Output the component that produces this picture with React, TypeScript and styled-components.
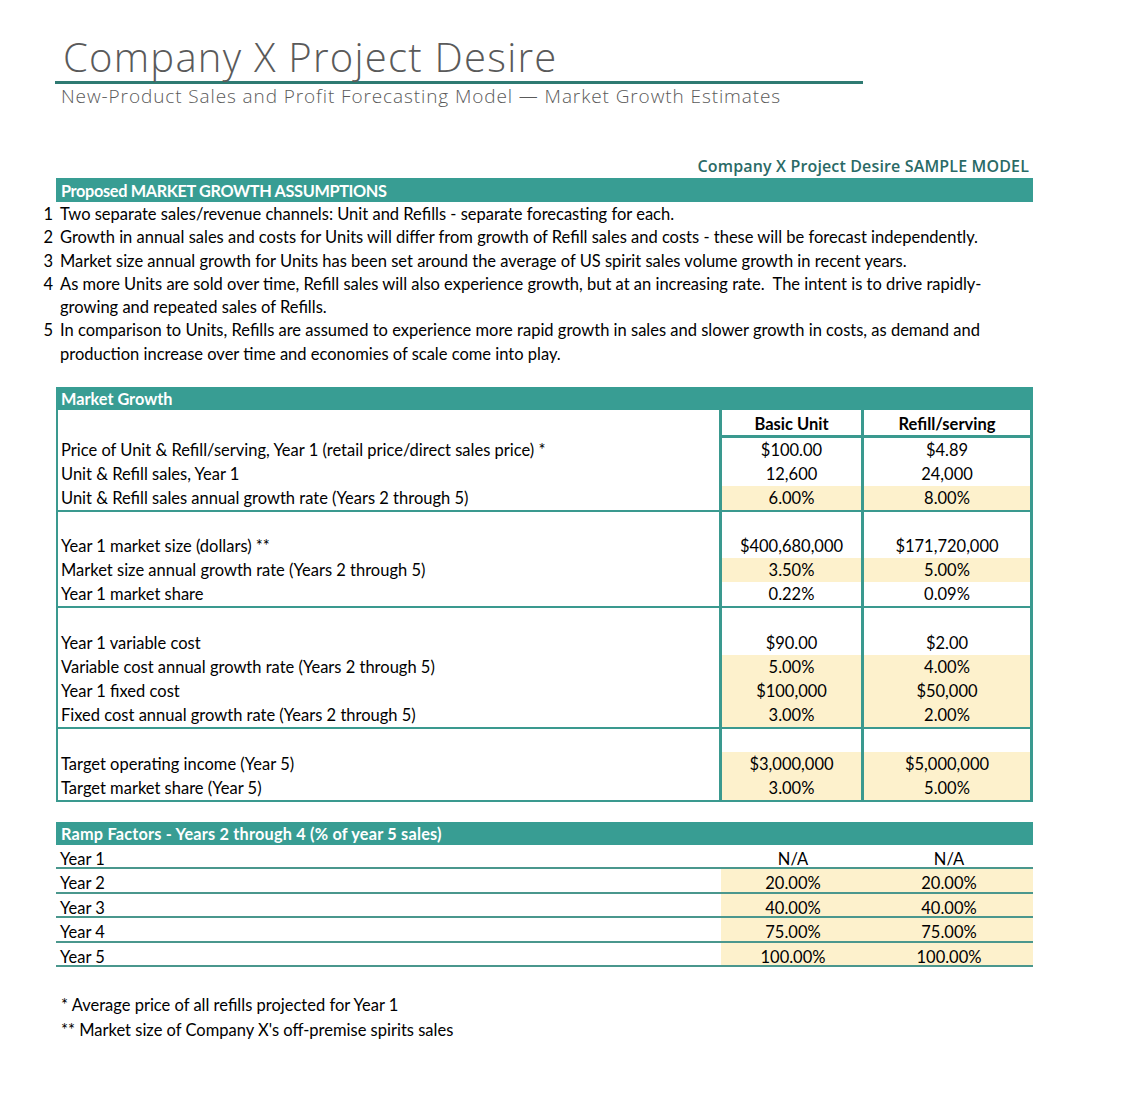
import React from "react";
import styled, { createGlobalStyle } from "styled-components";

const TEAL = "#389d93";
const TEAL_DARK = "#2e7a72";
const BORDER = "#3a998f";
const CREAM = "#fdf1cc";
const BODY_FONT = `Lato, "Noto Sans", sans-serif`;
const TITLE_FONT = `"Open Sans", "DejaVu Sans", sans-serif`;
const BODY_SIZE = "16.5px";

const Global = createGlobalStyle`
  html, body { margin: 0; padding: 0; background: #ffffff; }
  body { font-family: ${BODY_FONT}; color: #000; }
`;

const Page = styled.div`
  width: 1128px;
  height: 1108px;
  box-sizing: border-box;
  padding: 0 0 0 40px;
  overflow: hidden;
`;

const Sheet = styled.div`
  width: 993px;
  display: flex;
  flex-direction: column;
`;

const TitleBlock = styled.header`
  margin-left: 15px;
  width: 808px;
  padding-top: 33px;
`;

const Title = styled.h1`
  margin: 0 0 0 8px;
  font-family: ${TITLE_FONT};
  font-weight: 300;
  font-size: 40px;
  line-height: 48px;
  color: #5a5a5a;
  letter-spacing: 1.25px;
`;

const Rule = styled.div`
  height: 3px;
  background: ${TEAL_DARK};
`;

const Subtitle = styled.p`
  margin: 0 0 0 6px;
  font-family: ${TITLE_FONT};
  font-weight: 300;
  font-size: 19px;
  line-height: 24px;
  color: #5a5a5a;
  letter-spacing: 0.9px;
  white-space: nowrap;
`;

const ModelTag = styled.div`
  margin-top: 48px;
  margin-left: 16px;
  width: 973px;
  text-align: right;
  font-family: ${TITLE_FONT};
  font-weight: 600;
  font-size: 16px;
  line-height: 20px;
  letter-spacing: 0.15px;
  color: #2a6a66;
`;

const Indented = styled.section<{ $top: number }>`
  margin-left: 16px;
  width: 977px;
  margin-top: ${(p) => p.$top}px;
`;

const Bar = styled.div<{ $h: number; $ls?: number }>`
  background: ${TEAL};
  color: #ffffff;
  font-weight: 700;
  font-size: 16.3px;
  letter-spacing: ${(p) => p.$ls ?? 0}px;
  height: ${(p) => p.$h}px;
  line-height: ${(p) => p.$h + 1}px;
  padding-left: 5px;
`;

const List = styled.ol`
  list-style: none;
  margin: 0 0 0 -16px;
  padding: 1px 0 0 0;
`;

const Item = styled.li`
  display: grid;
  grid-template-columns: 16px 1fr;
  font-size: ${BODY_SIZE};
  line-height: 23.3px;
`;

const Num = styled.span`
  text-align: right;
  padding-right: 3px;
`;

const ItemText = styled.span`
  padding-left: 4px;
  width: 940px;
  white-space: pre-wrap;
`;

const Table = styled.div`
  border-left: 2px solid ${BORDER};
`;

const Group = styled.div`
  border-bottom: 2px solid ${BORDER};
`;

const Row = styled.div`
  display: grid;
  grid-template-columns: 1fr 142px 172px;
  font-size: ${BODY_SIZE};
`;

const Label = styled.div<{ $h: number }>`
  height: ${(p) => p.$h}px;
  line-height: 25px;
  padding-left: 3px;
  white-space: nowrap;
`;

const Cell = styled.div<{ $hl?: boolean; $last?: boolean; $head?: boolean; $h: number }>`
  border-left: 3px solid ${BORDER};
  border-right: ${(p) => (p.$last ? `3px solid ${BORDER}` : "none")};
  border-bottom: ${(p) => (p.$head ? `3px solid ${BORDER}` : "none")};
  background: ${(p) => (p.$hl ? CREAM : "#ffffff")};
  text-align: center;
  font-weight: ${(p) => (p.$head ? 700 : 400)};
  height: ${(p) => p.$h}px;
  line-height: ${(p) => (p.$head ? 28 : 25)}px;
`;

const RampRow = styled.div`
  display: grid;
  grid-template-columns: 665px 144px 168px;
  grid-template-rows: 22.4px;
  font-size: ${BODY_SIZE};
  height: 22.4px;
  line-height: 28px;
  border-bottom: 2px solid #4a978d;
`;

const RampLabel = styled.div`
  padding-left: 4px;
`;

const RampCell = styled.div<{ $hl?: boolean }>`
  background: ${(p) => (p.$hl ? CREAM : "transparent")};
  text-align: center;
`;

const Notes = styled.div`
  margin-left: 21px;
  margin-top: 26px;
  font-size: ${BODY_SIZE};
  line-height: 25px;
`;

type Val = { v: string; hl?: boolean };
type MRow = { label: string; a: Val; b: Val };

const assumptions: { n: string; lines: string }[] = [
  { n: "1", lines: "Two separate sales/revenue channels: Unit and Refills - separate forecasting for each." },
  { n: "2", lines: "Growth in annual sales and costs for Units will differ from growth of Refill sales and costs - these will be forecast independently." },
  { n: "3", lines: "Market size annual growth for Units has been set around the average of US spirit sales volume growth in recent years." },
  { n: "4", lines: "As more Units are sold over time, Refill sales will also experience growth, but at an increasing rate.  The intent is to drive rapidly-growing and repeated sales of Refills." },
  { n: "5", lines: "In comparison to Units, Refills are assumed to experience more rapid growth in sales and slower growth in costs, as demand and production increase over time and economies of scale come into play." },
];

const groups: { blank: number; rows: MRow[] }[] = [
  {
    blank: 28,
    rows: [
      { label: "Price of Unit & Refill/serving, Year 1 (retail price/direct sales price) *", a: { v: "$100.00" }, b: { v: "$4.89" } },
      { label: "Unit & Refill sales, Year 1", a: { v: "12,600" }, b: { v: "24,000" } },
      { label: "Unit & Refill sales annual growth rate (Years 2 through 5)", a: { v: "6.00%", hl: true }, b: { v: "8.00%", hl: true } },
    ],
  },
  {
    blank: 22,
    rows: [
      { label: "Year 1 market size (dollars) **", a: { v: "$400,680,000" }, b: { v: "$171,720,000" } },
      { label: "Market size annual growth rate (Years 2 through 5)", a: { v: "3.50%", hl: true }, b: { v: "5.00%", hl: true } },
      { label: "Year 1 market share", a: { v: "0.22%" }, b: { v: "0.09%" } },
    ],
  },
  {
    blank: 23,
    rows: [
      { label: "Year 1 variable cost", a: { v: "$90.00" }, b: { v: "$2.00" } },
      { label: "Variable cost annual growth rate (Years 2 through 5)", a: { v: "5.00%", hl: true }, b: { v: "4.00%", hl: true } },
      { label: "Year 1 fixed cost", a: { v: "$100,000", hl: true }, b: { v: "$50,000", hl: true } },
      { label: "Fixed cost annual growth rate (Years 2 through 5)", a: { v: "3.00%", hl: true }, b: { v: "2.00%", hl: true } },
    ],
  },
  {
    blank: 23,
    rows: [
      { label: "Target operating income (Year 5)", a: { v: "$3,000,000", hl: true }, b: { v: "$5,000,000", hl: true } },
      { label: "Target market share (Year 5)", a: { v: "3.00%", hl: true }, b: { v: "5.00%", hl: true } },
    ],
  },
];

const ramp: { label: string; a: string; b: string; hl: boolean }[] = [
  { label: "Year 1", a: "N/A", b: "N/A", hl: false },
  { label: "Year 2", a: "20.00%", b: "20.00%", hl: true },
  { label: "Year 3", a: "40.00%", b: "40.00%", hl: true },
  { label: "Year 4", a: "75.00%", b: "75.00%", hl: true },
  { label: "Year 5", a: "100.00%", b: "100.00%", hl: true },
];

export default function App() {
  return (
    <>
      <Global />
      <Page>
        <Sheet>
          <TitleBlock>
            <Title>Company X Project Desire</Title>
            <Rule />
            <Subtitle>New-Product Sales and Profit Forecasting Model — Market Growth Estimates</Subtitle>
          </TitleBlock>

          <ModelTag>Company X Project Desire SAMPLE MODEL</ModelTag>

          <Indented $top={2}>
            <Bar $h={24} $ls={-0.35}>Proposed MARKET GROWTH ASSUMPTIONS</Bar>
            <List>
              {assumptions.map((a) => (
                <Item key={a.n}>
                  <Num>{a.n}</Num>
                  <ItemText>{a.lines}</ItemText>
                </Item>
              ))}
            </List>
          </Indented>

          <Indented $top={21}>
            <Bar $h={23}>Market Growth</Bar>
            <Table>
              {groups.map((g, gi) => (
                <Group key={gi}>
                  <Row>
                    <Label $h={g.blank} />
                    {gi === 0 ? (
                      <>
                        <Cell $head $h={g.blank - 3}>Basic Unit</Cell>
                        <Cell $head $last $h={g.blank - 3}>Refill/serving</Cell>
                      </>
                    ) : (
                      <>
                        <Cell $h={g.blank} />
                        <Cell $last $h={g.blank} />
                      </>
                    )}
                  </Row>
                  {g.rows.map((r) => (
                    <Row key={r.label}>
                      <Label $h={24}>{r.label}</Label>
                      <Cell $hl={r.a.hl} $h={24}>{r.a.v}</Cell>
                      <Cell $hl={r.b.hl} $last $h={24}>{r.b.v}</Cell>
                    </Row>
                  ))}
                </Group>
              ))}
            </Table>
          </Indented>

          <Indented $top={20}>
            <Bar $h={23} $ls={0.2}>Ramp Factors - Years 2 through 4 (% of year 5 sales)</Bar>
            {ramp.map((r) => (
              <RampRow key={r.label}>
                <RampLabel>{r.label}</RampLabel>
                <RampCell $hl={r.hl}>{r.a}</RampCell>
                <RampCell $hl={r.hl}>{r.b}</RampCell>
              </RampRow>
            ))}
          </Indented>

          <Notes>
            <div>* Average price of all refills projected for Year 1</div>
            <div>** Market size of Company X's off-premise spirits sales</div>
          </Notes>
        </Sheet>
      </Page>
    </>
  );
}
